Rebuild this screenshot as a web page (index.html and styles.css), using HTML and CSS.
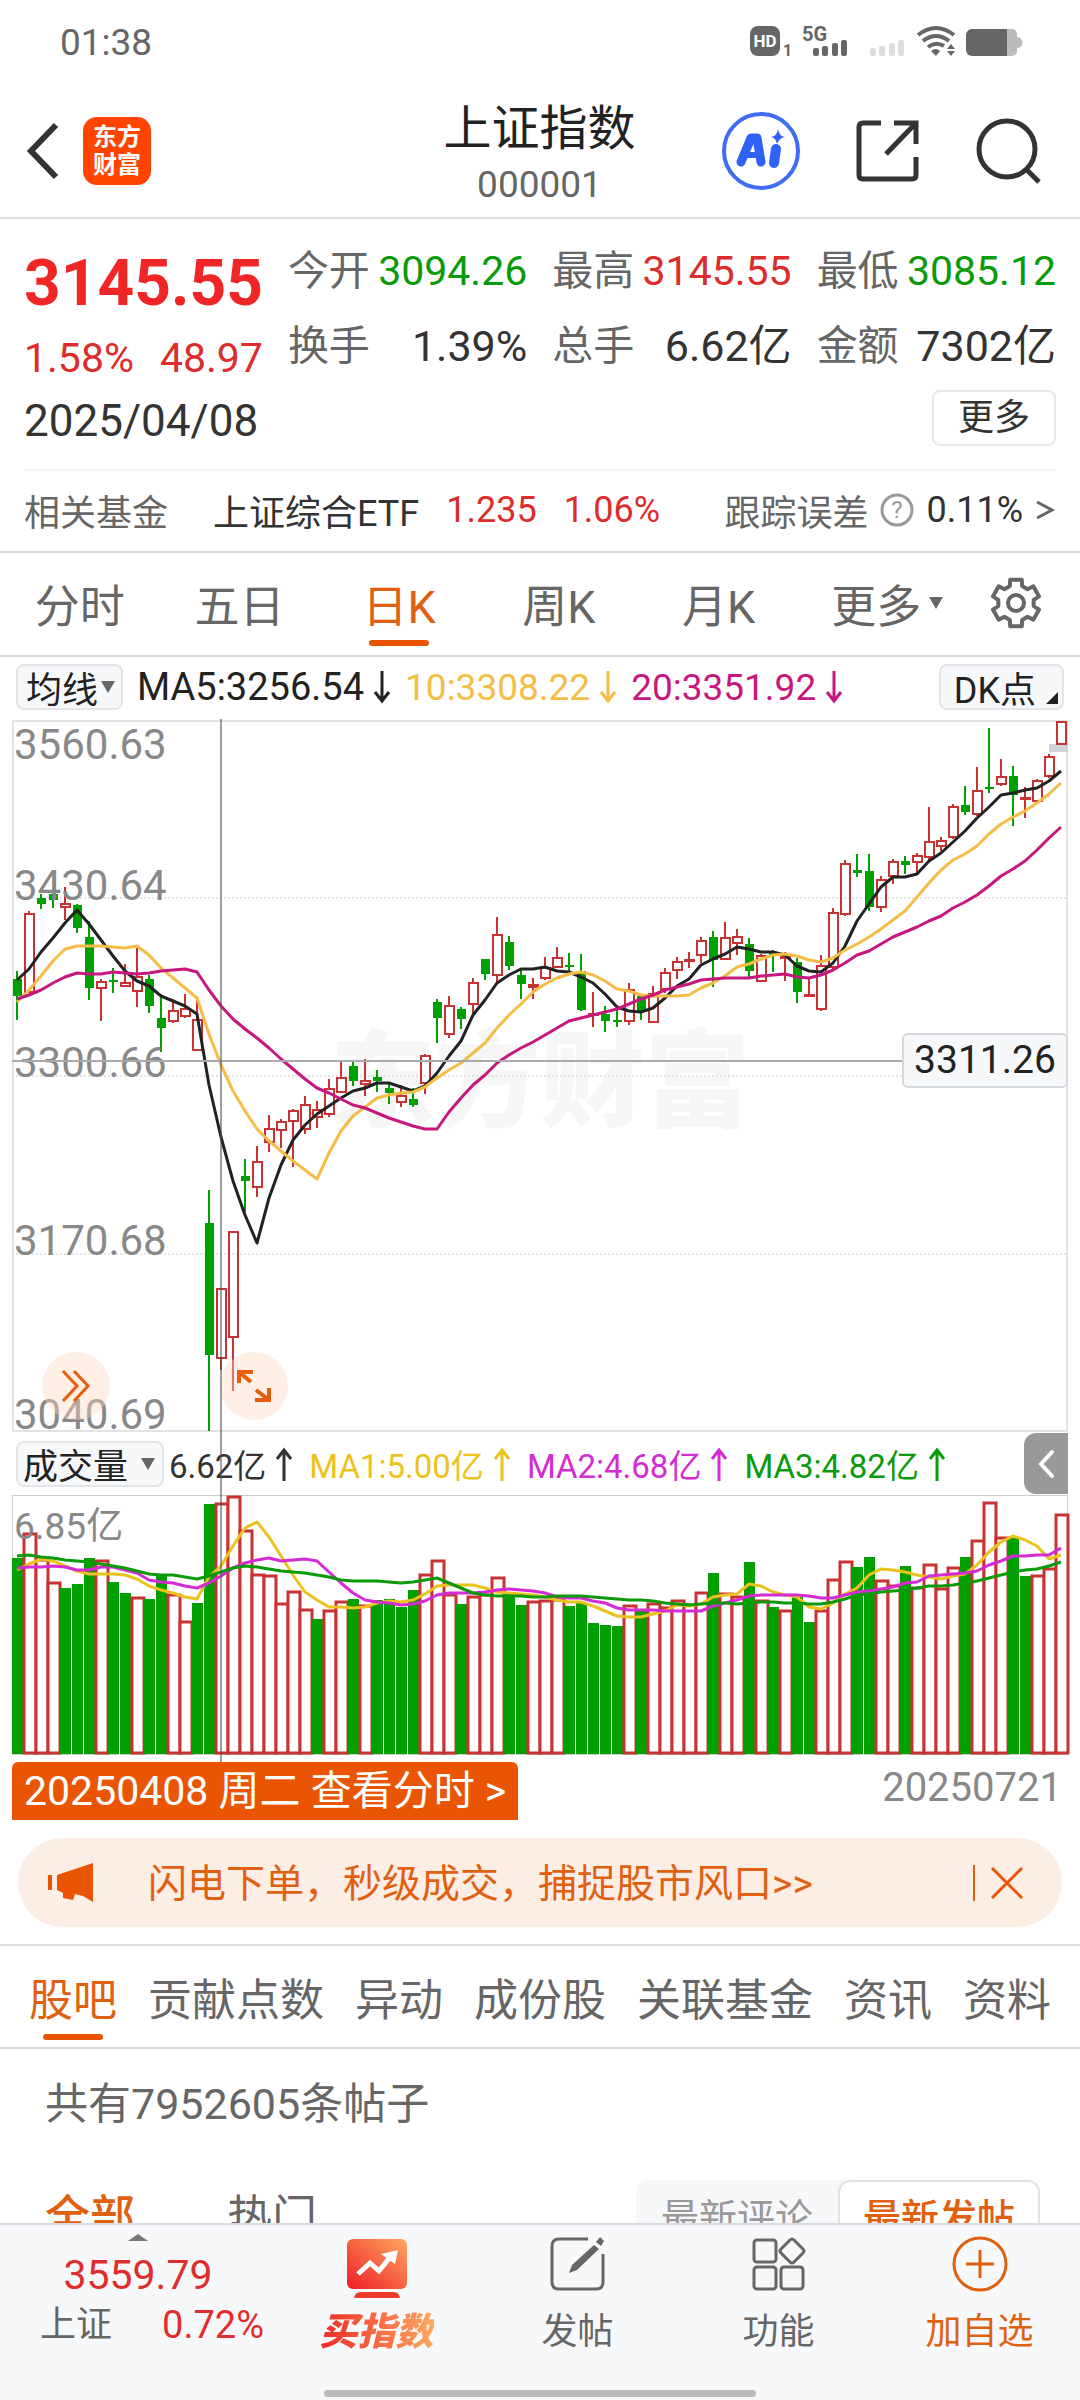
FILE: index.html
```html
<!DOCTYPE html>
<html lang="zh-CN">
<head>
    <meta charset="UTF-8">
    <meta name="viewport" content="width=device-width, initial-scale=1.0">
    <title>上证指数 000001</title>
    <link rel="stylesheet" href="styles.css">
</head>
<body>
    <div class="status-bar">
        <span>01:38</span>
        <svg class="status-icons" width="272" height="32" viewBox="0 0 272 32">
            <rect x="0" y="0" width="30" height="30" rx="8" fill="#666"/>
            <text x="15" y="21" class="hd-text">HD</text>
            <text x="33" y="30" class="sim-text">1</text>
            <text x="52" y="15" class="net-text">5G</text>
            <g fill="#666">
                <rect x="63" y="22" width="6" height="8" rx="2"/>
                <rect x="72" y="20" width="6" height="10" rx="2"/>
                <rect x="82" y="17" width="6" height="13" rx="2"/>
                <rect x="91" y="14" width="6" height="16" rx="2"/>
            </g>
            <g fill="#ddd">
                <rect x="120" y="22" width="6" height="8" rx="2"/>
                <rect x="129" y="20" width="6" height="10" rx="2"/>
                <rect x="139" y="17" width="6" height="13" rx="2"/>
                <rect x="148" y="14" width="6" height="16" rx="2"/>
            </g>
            <g fill="none" stroke="#666" stroke-width="4">
                <path d="M168 9 Q186 -5 204 9"/>
                <path d="M173 15 Q186 5 199 15"/>
                <path d="M178 21 Q186 15 194 20"/>
            </g>
            <path d="M181 25 Q186 21 190 25 L186 30Z M197 23 l4 -5 4 5Z M197 25 h8 l-4 5Z" fill="#666"/>
            <path d="M252 3 h10 a5 5 0 0 1 5 5 v3 a4 4 0 0 1 0 11 v3 a5 5 0 0 1 -5 5 h-10Z" fill="#bbb"/>
            <path d="M257 3 v27 h-35 a6 6 0 0 1 -6 -6 v-15 a6 6 0 0 1 6 -6Z" fill="#666"/>
        </svg>
    </div>

    <header class="header">
        <div class="header-left">
            <button class="icon-button" aria-label="返回">
                <svg width="34" height="60" viewBox="0 0 34 60"><path d="M31 4 L6 30 L31 56" fill="none" stroke="#333" stroke-width="6"/></svg>
            </button>
            <div class="logo">东方<br>财富</div>
        </div>
        <div class="header-title">
            <h1>上证指数</h1>
            <p>000001</p>
        </div>
        <div class="header-right">
            <button class="icon-button" aria-label="AI">
                <svg width="78" height="78" viewBox="0 0 78 78">
                    <circle cx="39" cy="39" r="37" fill="#fff" stroke="#3f6cf2" stroke-width="4"/>
                    <g fill="none" stroke="#2f63f6" stroke-linecap="round" stroke-linejoin="round">
                        <path d="M19 50 L29 26 L35 26 L39 50" stroke-width="9"/>
                        <path d="M24 43 H37" stroke-width="6"/>
                        <path d="M54 37 L52 51" stroke-width="10"/>
                    </g>
                    <path d="M56 17 Q57 24 63 25 Q57 26 55 32 Q54 26 49 25 Q55 24 56 17Z" fill="#2f63f6"/>
                </svg>
            </button>
            <button class="icon-button" aria-label="分享">
                <svg width="64" height="64" viewBox="0 0 64 64" fill="none" stroke="#333" stroke-width="5">
                    <path d="M25 4 H7 Q3 4 3 8 V56 Q3 60 7 60 H56 Q60 60 60 56 V38"/>
                    <path d="M38 4 H60 V25 M60 4 L30 35"/>
                </svg>
            </button>
            <button class="icon-button" aria-label="搜索">
                <svg width="66" height="66" viewBox="0 0 66 66" fill="none" stroke="#333" stroke-width="5">
                    <circle cx="31" cy="31" r="28"/>
                    <path d="M50 51 L63 64"/>
                </svg>
            </button>
        </div>
    </header>

    <main class="content">
        <section class="quote">
            <div class="quote-main">
                <div class="price">3145.55</div>
                <div class="change"><span>1.58%</span><span>48.97</span></div>
                <div class="date">2025/04/08</div>
            </div>
            <div class="quote-side">
                <dl class="stats">
                    <div><dt>今开</dt><dd class="down">3094.26</dd></div>
                    <div><dt>最高</dt><dd class="up">3145.55</dd></div>
                    <div><dt>最低</dt><dd class="down">3085.12</dd></div>
                    <div><dt>换手</dt><dd class="amount">1.39%</dd></div>
                    <div><dt>总手</dt><dd class="amount">6.62亿</dd></div>
                    <div><dt>金额</dt><dd class="amount">7302亿</dd></div>
                </dl>
                <button class="more-button">更多</button>
            </div>
        </section>

        <a class="fund" href="#">
            <span class="muted">相关基金</span>
            <span class="fund-name">上证综合ETF</span>
            <span class="up fund-price">1.235</span>
            <span class="up">1.06%</span>
            <span class="fund-error">
                <span class="muted">跟踪误差</span>
                <svg width="34" height="34" viewBox="0 0 34 34">
                    <circle cx="17" cy="17" r="15" fill="none" stroke="#999" stroke-width="3"/>
                    <text x="17" y="25" class="help-text">?</text>
                </svg>
                <span>0.11%</span>
                <svg width="20" height="24" viewBox="0 0 20 24"><path d="M2 4 L17 12 L2 20" fill="none" stroke="#666" stroke-width="3"/></svg>
            </span>
        </a>

        <nav class="period-tabs">
            <button>分时</button>
            <button>五日</button>
            <button class="active">日K</button>
            <button>周K</button>
            <button>月K</button>
            <button>更多<i class="caret"></i></button>
            <button aria-label="设置">
                <svg width="52" height="52" viewBox="-26 -26 52 52" fill="none" stroke="#666" stroke-width="4" stroke-linejoin="round">
                    <path d="M-6.2 -16.9 L-5.8 -23.3 H5.8 L6.2 -16.9 L11.6 -13.8 L17.3 -16.7 L23.1 -6.6 L17.7 -3.1 V3.1 L23.1 6.6 L17.3 16.7 L11.6 13.8 L6.2 16.9 L5.8 23.3 H-5.8 L-6.2 16.9 L-11.6 13.8 L-17.3 16.7 L-23.1 6.6 L-17.7 3.1 V-3.1 L-23.1 -6.6 L-17.3 -16.7 L-11.6 -13.8Z"/>
                    <circle cx="0" cy="0" r="8"/>
                </svg>
            </button>
        </nav>

        <section class="charts">
            <div class="legend">
                <button class="chip">均线<i class="caret"></i></button>
                <span class="ma-black">MA5:3256.54<svg class="arrow" viewBox="0 0 18 34"><path d="M9 1 V31 M2 22 L9 31 L16 22"/></svg></span>
                <span class="ma-yellow">10:3308.22<svg class="arrow" viewBox="0 0 18 34"><path d="M9 1 V31 M2 22 L9 31 L16 22"/></svg></span>
                <span class="ma-magenta">20:3351.92<svg class="arrow" viewBox="0 0 18 34"><path d="M9 1 V31 M2 22 L9 31 L16 22"/></svg></span>
                <button class="chip chip-dk">DK点<i class="corner"></i></button>
            </div>

            <div class="price-chart">
                <svg id="price-svg" viewBox="0 0 1056 712"></svg>
                <div class="cross-price">3311.26</div>
                <button class="round-button expand-right" aria-label="展开">
                    <svg width="30" height="32" viewBox="0 0 30 32" fill="none" stroke="#e85d0c" stroke-width="3"><path d="M2 1 L16 16 L2 31 M13 1 L27 16 L13 31"/></svg>
                </button>
                <button class="round-button full-screen" aria-label="全屏">
                    <svg width="36" height="34" viewBox="0 0 36 34" fill="none" stroke="#e85d0c" stroke-width="4"><path d="M3 14 V3 H17 M3 3 L15 13 M33 19 V31 H19 M33 31 L20 21"/></svg>
                </button>
            </div>

            <div class="legend volume-legend">
                <button class="chip">成交量<i class="caret"></i></button>
                <span>6.62亿<svg class="arrow" viewBox="0 0 18 34"><path d="M9 34 V3 M2 12 L9 3 L16 12"/></svg></span>
                <span class="vol-yellow">MA1:5.00亿<svg class="arrow" viewBox="0 0 18 34"><path d="M9 34 V3 M2 12 L9 3 L16 12"/></svg></span>
                <span class="vol-magenta">MA2:4.68亿<svg class="arrow" viewBox="0 0 18 34"><path d="M9 34 V3 M2 12 L9 3 L16 12"/></svg></span>
                <span class="vol-green">MA3:4.82亿<svg class="arrow" viewBox="0 0 18 34"><path d="M9 34 V3 M2 12 L9 3 L16 12"/></svg></span>
                <button class="collapse" aria-label="收起">
                    <svg width="18" height="30" viewBox="0 0 18 30"><path d="M15 3 L4 15 L15 27" fill="none" stroke="#fff" stroke-width="4" stroke-linecap="round"/></svg>
                </button>
            </div>

            <svg id="volume-svg" viewBox="0 0 1056 260"></svg>
            <div class="cross-line"></div>
        </section>

        <div class="date-row">
            <button class="date-button">20250408 周二 查看分时 &gt;</button>
            <span>20250721</span>
        </div>

        <div class="notice">
            <svg width="46" height="40" viewBox="0 0 46 40" fill="#ea5504">
                <path d="M0 12 H4 V27 H0Z M9 12 L45 0 V39 L35 33 L27 31 L25 37 L15 35 L15 30 L9 27Z"/>
            </svg>
            <a href="#">闪电下单，秒级成交，捕捉股市风口&gt;&gt;</a>
            <button aria-label="关闭">
                <svg width="34" height="34" viewBox="0 0 34 34"><path d="M2 2 L32 32 M32 2 L2 32" stroke="#ea5504" stroke-width="3"/></svg>
            </button>
        </div>

        <nav class="info-tabs">
            <button class="active">股吧</button>
            <button>贡献点数</button>
            <button>异动</button>
            <button>成份股</button>
            <button>关联基金</button>
            <button>资讯</button>
            <button>资料</button>
        </nav>

        <section class="posts">
            <p>共有7952605条帖子</p>
            <div class="filters">
                <button class="filter active">全部</button>
                <button class="filter">热门</button>
                <div class="sort">
                    <button>最新评论</button>
                    <button class="active">最新发帖</button>
                </div>
            </div>
        </section>
    </main>

    <footer class="bottom-bar">
        <div class="bottom-items">
            <button class="index-ticker">
                <i class="caret-up"></i>
                <span class="ticker-price">3559.79</span>
                <span class="ticker-row"><span>上证</span><span class="ticker-change">0.72%</span></span>
            </button>
            <button class="bottom-item buy">
                <svg width="60" height="62" viewBox="0 0 60 62">
                    <defs>
                        <linearGradient id="buy-fill" x1="0" y1="1" x2="1" y2="0">
                            <stop offset="0" stop-color="#ee1c25"/>
                            <stop offset="1" stop-color="#ffa860"/>
                        </linearGradient>
                    </defs>
                    <rect x="0" y="3" width="60" height="50" rx="6" fill="url(#buy-fill)"/>
                    <path d="M7 62 Q8 56 14 56 H46 Q52 56 53 62Z" fill="#ee3a2c"/>
                    <path d="M11 38 L23 27 L32 35 L44 20" fill="none" stroke="#fff" stroke-width="5"/>
                    <path d="M34 18 L51 14 L48 28Z" fill="#fff"/>
                </svg>
                <span>买指数</span>
            </button>
            <button class="bottom-item">
                <svg width="56" height="62" viewBox="0 0 56 62">
                    <path d="M38 3 H9 Q2 3 2 10 V46 Q2 53 9 53 H46 Q53 53 53 46 V18" fill="none" stroke="#666" stroke-width="3"/>
                    <path d="M50 1 L54 5 L51 10 L46 6Z M44 9 L49 13 L27 34 L19 37 L22 29Z" fill="#666"/>
                </svg>
                <span>发帖</span>
            </button>
            <button class="bottom-item">
                <svg width="54" height="62" viewBox="0 0 54 62" fill="none" stroke="#666" stroke-width="3">
                    <rect x="2" y="4" width="22" height="22" rx="3"/>
                    <rect x="2" y="31" width="22" height="22" rx="3"/>
                    <rect x="29" y="31" width="22" height="22" rx="3"/>
                    <path d="M38 4 Q40 2 42 4 L51 13 Q53 15 51 17 L42 26 Q40 28 38 26 L29 17 Q27 15 29 13Z"/>
                </svg>
                <span>功能</span>
            </button>
            <button class="bottom-item add">
                <svg width="58" height="62" viewBox="0 0 58 62" fill="none" stroke="#e06010" stroke-width="3">
                    <circle cx="29" cy="28" r="26"/>
                    <path d="M15 28 H43 M29 14 V42"/>
                </svg>
                <span>加自选</span>
            </button>
        </div>
        <div class="home-indicator"></div>
    </footer>

    <script src="chart.js"></script>
</body>
</html>
```
FILE: styles.css
```css
* {
    box-sizing: border-box;
}

body {
    margin: 0;
    height: 100vh;
    display: flex;
    flex-direction: column;
    background-color: #fff;
    color: #333;
    font-family: Roboto, "Noto Sans CJK SC", sans-serif;
    font-size: 36px;
}

h1, p, dl, dd {
    margin: 0;
    font-weight: 400;
}

button {
    padding: 0;
    border: none;
    background: none;
    color: inherit;
    font: inherit;
    cursor: pointer;
}

a {
    color: inherit;
    text-decoration: none;
}

svg {
    display: block;
    flex-shrink: 0;
    overflow: visible;
}

.up {
    color: #dc2c2c;
}

.down {
    color: #0a9a0a;
}

.muted {
    color: #666;
}

.caret {
    border: 7px solid transparent;
    border-top: 12px solid #666;
    border-bottom: none;
}

/* Status bar */
.status-bar {
    display: flex;
    justify-content: space-between;
    align-items: center;
    height: 84px;
    flex-shrink: 0;
    padding: 0 58px 0 60px;
    color: #666;
    font-size: 37px;
}

.hd-text {
    font-size: 17px;
    font-weight: 700;
    fill: #fff;
    text-anchor: middle;
}

.sim-text {
    font-size: 16px;
    font-weight: 700;
    fill: #666;
}

.net-text {
    font-size: 20px;
    font-weight: 700;
    fill: #666;
}

/* Header */
.header {
    display: grid;
    grid-template-columns: 1fr auto 1fr;
    align-items: center;
    height: 135px;
    flex-shrink: 0;
    padding: 0 38px 0 25px;
    border-bottom: 2px solid #ddd;
}

.header-left,
.header-right {
    display: flex;
    align-items: center;
}

.header-left {
    gap: 24px;
}

.header-right {
    justify-content: flex-end;
    gap: 56px;
}

.header-title {
    padding: 8px 0 0 12px;
    text-align: center;
}

.header-title h1 {
    color: #222;
    font-size: 48px;
    line-height: 60px;
}

.header-title p {
    color: #666;
    font-size: 37px;
    line-height: 52px;
}

.logo {
    width: 68px;
    height: 68px;
    padding-top: 6px;
    border-radius: 14px;
    background-color: #ff4400;
    color: #fff;
    font-size: 24px;
    font-weight: 700;
    line-height: 28px;
    text-align: center;
}

.content {
    flex: 1;
    min-height: 0;
    overflow: hidden;
}

/* Quote */
.quote {
    display: flex;
    gap: 25px;
    margin: 0 24px;
    padding: 22px 0 18px;
    border-bottom: 2px solid #f5f5f5;
    font-size: 41px;
    line-height: 60px;
}

.quote-main {
    padding-top: 8px;
}

.price {
    color: #f02626;
    font-size: 64px;
    font-weight: 700;
    line-height: 70px;
}

.change {
    display: flex;
    justify-content: space-between;
    margin-top: 9px;
    color: #dc2c2c;
}

.date {
    margin-top: 3px;
    font-size: 44px;
}

.quote-side {
    flex: 1;
    text-align: right;
}

.stats {
    display: grid;
    grid-template-columns: repeat(3, 1fr);
    gap: 15px 25px;
}

.stats div {
    display: flex;
    justify-content: space-between;
    white-space: nowrap;
}

.stats dt {
    color: #666;
}

.stats .amount {
    font-size: 43px;
}

.more-button {
    width: 124px;
    height: 56px;
    margin-top: 14px;
    border: 2px solid #e8e8e8;
    border-radius: 8px;
    font-size: 36px;
    line-height: 50px;
}

/* Related fund */
.fund {
    display: flex;
    align-items: center;
    height: 82px;
    padding: 0 25px 2px 24px;
    border-bottom: 2px solid #ddd;
    white-space: nowrap;
}

.fund-name {
    margin-left: 45px;
}

.fund-price {
    margin: 0 27px;
}

.fund-error {
    display: flex;
    align-items: center;
    gap: 12px;
    margin-left: auto;
}

.help-text {
    font-size: 24px;
    fill: #999;
    text-anchor: middle;
}

/* Period tabs */
.period-tabs {
    display: grid;
    grid-template-columns: repeat(5, 160fr) 178fr 80fr;
    height: 104px;
    padding: 0 24px 2px 0;
    border-bottom: 2px solid #ddd;
    color: #666;
    font-size: 45px;
}

.period-tabs button {
    display: flex;
    align-items: center;
    justify-content: center;
    gap: 8px;
    position: relative;
}

.period-tabs .active,
.info-tabs .active {
    color: #e06010;
}

.period-tabs .active::after,
.info-tabs .active::after {
    content: "";
    position: absolute;
    left: 50%;
    bottom: 7px;
    width: 60px;
    height: 6px;
    margin-left: -30px;
    border-radius: 3px;
    background-color: #ea5504;
}

/* Charts */
.charts {
    position: relative;
    padding: 0 12px;
}

.charts text {
    font-size: 42px;
    fill: #888;
}

.charts .watermark {
    font-size: 105px;
    font-weight: 900;
    fill: #f6f6f6;
    text-anchor: middle;
}

.charts .volume-label {
    font-size: 37px;
}

.legend {
    display: flex;
    align-items: center;
    gap: 14px;
    height: 63px;
    padding: 0 4px 3px;
    font-size: 37px;
    white-space: nowrap;
}

.legend span {
    display: flex;
    align-items: center;
    gap: 9px;
}

.arrow {
    width: 18px;
    height: 34px;
    fill: none;
    stroke: currentColor;
    stroke-width: 3;
}

.chip {
    display: flex;
    align-items: center;
    gap: 3px;
    height: 46px;
    padding: 0 6px 0 8px;
    border: 2px solid #e3e5e9;
    border-radius: 8px;
    background-color: #f7f8fa;
    color: #222;
    font-size: 36px;
}

.chip-dk {
    gap: 10px;
    margin-left: auto;
    padding: 0 4px 0 13px;
}

.corner {
    align-self: flex-end;
    margin-bottom: 4px;
    border-left: 12px solid transparent;
    border-bottom: 12px solid #222;
}

.legend .ma-black {
    color: #222;
    font-size: 38px;
}

.ma-yellow {
    color: #f5bd45;
}

.ma-magenta {
    color: #c7177e;
}

.volume-legend {
    gap: 16px;
    padding: 0 0 0 4px;
    font-size: 33px;
}

.volume-legend .chip {
    gap: 13px;
    margin-right: -11px;
    padding: 0 7px 0 5px;
    font-size: 35px;
}

.vol-yellow {
    color: #ecc21c;
}

.vol-magenta {
    color: #d42bd4;
}

.vol-green {
    color: #0a9a0a;
}

.collapse {
    display: flex;
    align-items: center;
    justify-content: center;
    width: 44px;
    height: 61px;
    margin-left: auto;
    border-radius: 12px 0 0 12px;
    background-color: #999;
}

.price-chart {
    position: relative;
}

.price-chart > svg,
.charts > svg {
    width: 100%;
}

.cross-price {
    position: absolute;
    right: 0;
    top: 44%;
    width: 166px;
    height: 55px;
    border: 2px solid #d5d9de;
    border-radius: 6px;
    background-color: #f7f8fa;
    color: #222;
    font-size: 39px;
    line-height: 51px;
    text-align: center;
}

.cross-line {
    position: absolute;
    left: 20.4%;
    top: 62px;
    bottom: -7px;
    width: 2px;
    background-color: rgba(80, 80, 80, 0.55);
}

.round-button {
    position: absolute;
    bottom: 12px;
    width: 68px;
    height: 68px;
    border-radius: 50%;
    background-color: rgba(255, 215, 190, 0.4);
}

.round-button svg {
    margin: auto;
}

.expand-right {
    left: 30px;
}

.full-screen {
    left: 208px;
}

/* Selected date */
.date-row {
    display: flex;
    justify-content: space-between;
    margin-top: 7px;
    padding: 0 18px 0 12px;
    color: #888;
    font-size: 40px;
    line-height: 52px;
}

.date-button {
    height: 58px;
    padding: 0 12px;
    border-radius: 6px 6px 0 0;
    background-color: #ea5504;
    color: #fff;
    font-size: 41px;
}

/* Notice */
.notice {
    display: flex;
    align-items: center;
    height: 89px;
    margin: 18px 18px 17px;
    padding: 0 38px 0 30px;
    border-radius: 45px;
    background-color: #fdeee5;
    color: #e06010;
    font-size: 39px;
}

.notice a {
    margin-left: 54px;
    padding-bottom: 5px;
}

.notice button {
    height: 36px;
    margin-left: auto;
    padding-left: 15px;
    border-left: 2px solid #e06010;
}

/* Info tabs */
.info-tabs {
    display: flex;
    justify-content: space-between;
    height: 105px;
    padding: 0 29px;
    border-top: 2px solid #ddd;
    border-bottom: 2px solid #ddd;
    color: #666;
    font-size: 44px;
}

.info-tabs button {
    position: relative;
    white-space: nowrap;
}

/* Posts */
.posts {
    padding: 0 40px 0 45px;
    color: #666;
    font-size: 43px;
}

.posts p {
    padding-top: 24px;
    line-height: 62px;
}

.filters {
    display: flex;
    align-items: flex-start;
    margin-top: 45px;
}

.filter {
    margin-right: 92px;
    font-size: 45px;
    line-height: 76px;
}

.filter.active {
    color: #e06010;
    font-weight: 500;
}

.sort {
    display: flex;
    margin-left: auto;
    border-radius: 12px;
    background-color: #f7f8fa;
    color: #999;
    font-size: 38px;
    line-height: 72px;
}

.sort button {
    width: 202px;
}

.sort .active {
    border: 2px solid #e3e3e3;
    border-radius: 12px;
    background-color: #fff;
    color: #e06010;
    font-weight: 500;
}

/* Bottom bar */
.bottom-bar {
    flex-shrink: 0;
    height: 177px;
    display: flex;
    flex-direction: column;
    justify-content: space-between;
    padding-bottom: 3px;
    border-top: 2px solid #d8dce0;
    background-color: #f7f8fa;
    color: #666;
}

.bottom-items {
    display: grid;
    grid-template-columns: 276fr repeat(4, 201fr);
}

.bottom-items button {
    display: flex;
    flex-direction: column;
    align-items: center;
}

.bottom-item {
    gap: 9px;
    padding-top: 11px;
    line-height: 50px;
}

.index-ticker {
    padding-top: 9px;
    line-height: 50px;
}

.caret-up {
    border: 10px solid transparent;
    border-bottom: 7px solid #777;
    border-top: none;
}

.ticker-price {
    margin-top: 9px;
    color: #e02c2c;
    font-size: 41px;
}

.ticker-row {
    display: flex;
    justify-content: space-between;
    width: 224px;
    margin-left: 28px;
}

.ticker-change {
    color: #e02c2c;
    font-size: 38px;
}

.buy span {
    background: linear-gradient(90deg, #ee2a25, #ffa860);
    -webkit-background-clip: text;
    background-clip: text;
    color: transparent;
    font-size: 38px;
    font-style: italic;
    font-weight: 900;
}

.add {
    color: #e06010;
}

.home-indicator {
    width: 40%;
    height: 7px;
    margin: 0 auto;
    border-radius: 4px;
    background-color: #bbb;
}
```
FILE: chart.js
```js
const UP = '#c83232';
const DOWN = '#00a000';
const STEP = 12;
const FIRST_X = 5;

// Each day: direction, high, body top, body bottom, low (levels from the top of the scale)
const days = [
    ['d', 575, 592, 627, 678], ['u', 447, 451, 621, 621], ['d', 410, 420, 432, 442], ['d', 405, 411, 423, 440],
    ['u', 395, 430, 440, 466], ['d', 431, 435, 482, 494], ['d', 467, 503, 609, 636], ['u', 590, 595, 612, 681],
    ['d', 567, 594, 598, 621], ['u', 560, 598, 608, 608], ['u', 525, 585, 618, 650], ['d', 582, 590, 649, 664],
    ['d', 622, 674, 694, 746], ['u', 634, 657, 682, 684], ['u', 622, 653, 671, 673], ['u', 630, 676, 743, 743],
    ['d', 1038, 1109, 1388, 1550], ['u', 1246, 1246, 1397, 1420], ['u', 1126, 1126, 1352, 1465], ['d', 973, 1009, 1019, 1085],
    ['u', 945, 977, 1033, 1054], ['u', 879, 906, 939, 958], ['u', 888, 891, 914, 950], ['u', 867, 868, 893, 990],
    ['u', 840, 855, 911, 919], ['u', 850, 866, 886, 906], ['u', 803, 822, 879, 884], ['u', 767, 798, 832, 832],
    ['d', 765, 776, 807, 818], ['u', 760, 805, 815, 838], ['d', 784, 799, 808, 831], ['d', 809, 822, 832, 856],
    ['u', 815, 836, 854, 862], ['d', 822, 845, 859, 863], ['u', 750, 751, 813, 835], ['d', 634, 640, 674, 726],
    ['u', 626, 647, 710, 716], ['d', 651, 654, 676, 696], ['u', 589, 597, 646, 668], ['d', 548, 549, 581, 594],
    ['u', 459, 496, 584, 598], ['d', 500, 513, 563, 571], ['d', 570, 583, 602, 634], ['u', 588, 601, 609, 634],
    ['u', 545, 565, 592, 593], ['u', 523, 544, 567, 567], ['d', 536, 562, 565, 578], ['d', 539, 575, 657, 658],
    ['u', 618, 662, 665, 693], ['d', 649, 665, 680, 703], ['d', 656, 678, 682, 692], ['u', 600, 613, 683, 689],
    ['d', 628, 628, 658, 677], ['u', 605, 620, 684, 684], ['u', 568, 576, 615, 620], ['u', 545, 553, 573, 590],
    ['u', 534, 549, 554, 567], ['u', 502, 508, 542, 557], ['d', 490, 503, 551, 607], ['u', 470, 501, 551, 551],
    ['u', 485, 499, 516, 540], ['d', 504, 516, 574, 592], ['u', 538, 540, 598, 598], ['d', 529, 536, 543, 576],
    ['u', 533, 541, 549, 595], ['d', 547, 554, 618, 642], ['u', 592, 623, 628, 630], ['u', 540, 561, 656, 659],
    ['u', 441, 448, 567, 570], ['u', 338, 345, 455, 457], ['d', 326, 359, 367, 374], ['d', 327, 361, 438, 446],
    ['u', 372, 379, 441, 448], ['u', 336, 340, 374, 389], ['d', 331, 340, 349, 369], ['u', 324, 329, 346, 367],
    ['u', 227, 298, 335, 343], ['u', 291, 297, 312, 320], ['u', 219, 225, 292, 294], ['d', 181, 222, 238, 243],
    ['u', 142, 190, 243, 246], ['d', 58, 185, 188, 197], ['u', 125, 160, 180, 181], ['d', 140, 161, 202, 266],
    ['u', 184, 205, 210, 250], ['u', 168, 169, 216, 218], ['u', 114, 118, 162, 165], ['u', 44, 44, 95, 95]
];

const ma5 = [594, 570, 534, 504, 473, 445, 475, 508, 543, 575, 596, 606, 626, 637, 648, 666, 815, 925, 1020, 1092, 1151, 1056, 985, 933, 900, 878, 861, 843, 829, 823, 811, 812, 820, 828, 818, 791, 755, 722, 668, 635, 599, 583, 569, 570, 566, 575, 576, 587, 599, 623, 651, 659, 660, 652, 631, 606, 592, 562, 549, 537, 523, 528, 534, 533, 541, 563, 573, 577, 557, 521, 469, 431, 395, 374, 374, 368, 341, 323, 301, 278, 249, 227, 201, 197, 190, 186, 172, 150];
const ma10 = [640, 615, 584, 553, 528, 520, 522, 521, 524, 525, 520, 541, 568, 588, 611, 631, 708, 773, 829, 871, 909, 934, 955, 976, 996, 1014, 960, 914, 882, 863, 844, 836, 832, 830, 819, 801, 783, 770, 748, 727, 695, 668, 645, 619, 601, 588, 580, 577, 583, 595, 612, 617, 624, 626, 627, 628, 625, 611, 599, 585, 565, 560, 548, 541, 537, 543, 550, 555, 547, 530, 516, 502, 486, 466, 447, 418, 387, 359, 338, 326, 309, 284, 262, 247, 234, 218, 199, 176];
const ma20 = [634, 624, 614, 599, 587, 579, 580, 581, 577, 579, 580, 578, 574, 572, 570, 576, 614, 648, 675, 697, 715, 738, 760, 781, 803, 823, 833, 845, 857, 865, 876, 885, 893, 903, 908, 908, 872, 843, 816, 794, 770, 752, 738, 725, 710, 694, 681, 674, 667, 661, 654, 643, 634, 624, 615, 607, 602, 594, 591, 589, 589, 588, 585, 582, 581, 586, 588, 583, 572, 557, 541, 531, 517, 503, 491, 480, 468, 457, 441, 428, 412, 393, 373, 357, 340, 318, 293, 268];

const volumes = [382, 308, 385, 453, 473, 460, 381, 387, 454, 486, 498, 504, 436, 490, 572, 517, 220, 217, 197, 298, 430, 434, 518, 482, 535, 565, 539, 512, 504, 522, 507, 506, 530, 477, 431, 389, 490, 519, 495, 490, 440, 489, 524, 511, 509, 505, 525, 517, 578, 582, 585, 522, 541, 517, 528, 507, 520, 484, 426, 487, 495, 393, 509, 530, 539, 500, 575, 537, 445, 391, 408, 379, 449, 463, 406, 470, 401, 473, 408, 378, 328, 214, 319, 322, 437, 433, 411, 249];
const volumeDown = [0, 4, 5, 6, 8, 9, 11, 12, 15, 16, 25, 28, 30, 31, 32, 33, 37, 41, 42, 46, 47, 48, 49, 50, 52, 58, 61, 63, 65, 66, 70, 71, 74, 79, 83, 84];
const vol1 = [417, 400, 386, 392, 407, 421, 431, 431, 431, 434, 445, 467, 477, 486, 500, 504, 440, 405, 345, 292, 273, 318, 376, 432, 484, 508, 529, 529, 533, 529, 518, 510, 514, 508, 490, 467, 463, 462, 463, 473, 483, 488, 489, 492, 500, 507, 514, 515, 526, 541, 557, 558, 560, 549, 542, 523, 526, 520, 500, 492, 489, 461, 466, 483, 494, 500, 530, 536, 518, 489, 472, 433, 416, 419, 423, 434, 440, 445, 437, 430, 402, 365, 333, 315, 327, 347, 385, 373];
const vol2 = [411, 409, 408, 406, 408, 417, 417, 410, 410, 418, 428, 449, 453, 457, 466, 472, 457, 437, 412, 397, 389, 383, 390, 389, 386, 392, 425, 457, 487, 507, 514, 518, 522, 521, 510, 493, 487, 488, 487, 483, 479, 476, 477, 481, 487, 498, 502, 502, 510, 518, 533, 537, 537, 539, 540, 541, 542, 541, 525, 516, 507, 495, 492, 493, 494, 493, 496, 501, 503, 493, 485, 482, 476, 468, 457, 454, 437, 433, 429, 427, 420, 404, 390, 376, 377, 374, 374, 353];
const vol3 = [377, 374, 378, 383, 387, 391, 395, 399, 405, 413, 421, 429, 432, 432, 438, 446, 436, 424, 413, 407, 409, 416, 422, 424, 427, 432, 440, 448, 450, 452, 452, 453, 456, 455, 449, 442, 456, 472, 487, 494, 496, 497, 496, 498, 498, 496, 496, 496, 499, 503, 506, 507, 508, 511, 516, 520, 523, 521, 517, 518, 520, 517, 515, 515, 517, 518, 520, 520, 514, 506, 494, 491, 485, 481, 477, 471, 466, 465, 463, 458, 452, 443, 433, 424, 418, 414, 407, 394];

const dayX = i => FIRST_X + i * STEP;
const priceY = v => Math.round((v - 42) * 711 / 1507);
const volumeY = v => Math.round((v - 196) / 3) + 1;

function line(values, scale, color) {
    const points = values.map((v, i) => `${dayX(i)},${scale(v)}`).join(' ');
    return `<polyline points="${points}" fill="none" stroke="${color}" stroke-width="3" stroke-linejoin="round"/>`;
}

function candle([dir, high, top, bottom, low], i) {
    const x = dayX(i);
    const [h, t, b, l] = [high, top, bottom, low].map(priceY);
    if (dir === 'd') {
        return `<path d="M${x} ${h}V${l}" stroke="${DOWN}" stroke-width="2"/>
            <rect x="${x - 4}" y="${t}" width="9" height="${Math.max(b - t, 2)}" fill="${DOWN}"/>`;
    }
    return `<path d="M${x} ${h}V${t}M${x} ${b}V${l}" stroke="${UP}" stroke-width="2"/>
        <rect x="${x - 4}" y="${t + 1}" width="9" height="${Math.max(b - t - 2, 1)}" fill="none" stroke="${UP}" stroke-width="2"/>`;
}

function drawPrice() {
    const grid = [178, 356, 534].map(y => `<path d="M0 ${y}H1056" stroke="#e4e4e4" stroke-width="2" stroke-dasharray="2 2"/>`);
    const labels = [['3560.63', 39], ['3430.64', 180], ['3300.66', 357], ['3170.68', 535], ['3040.69', 709]]
        .map(([text, y]) => `<text x="2" y="${y}">${text}</text>`);
    document.getElementById('price-svg').innerHTML = `
        <text class="watermark" x="528" y="398">东方财富</text>
        <path d="M1 1H1055V711H1Z" fill="none" stroke="#e3e3e3" stroke-width="2"/>
        ${grid.join('')}
        <rect x="1037" y="24" width="19" height="8" fill="#d0d4d9"/>
        ${days.map(candle).join('')}
        ${labels.join('')}
        ${line(ma5, priceY, '#222')}
        ${line(ma10, priceY, '#f5bd45')}
        ${line(ma20, priceY, '#c7177e')}
        <path d="M0 341H1056" stroke="#aaa" stroke-width="2"/>`;
}

function drawVolume() {
    const bars = volumes.map((v, i) => {
        const x = dayX(i);
        const y = volumeY(v);
        if (volumeDown.includes(i)) {
            return `<rect x="${x - 5}" y="${y}" width="11" height="${259 - y}" fill="${DOWN}"/>`;
        }
        return `<rect x="${x - 5}" y="${y + 1}" width="12" height="${257 - y}" fill="#fff" stroke="${UP}" stroke-width="3"/>`;
    });
    document.getElementById('volume-svg').innerHTML = `
        <path d="M0.5 0.5H1055.5V259.5H0.5Z" fill="none" stroke="#ccc"/>
        ${bars.join('')}
        <text class="volume-label" x="2" y="44">6.85亿</text>
        ${line(vol1, volumeY, '#ecc21c')}
        ${line(vol2, volumeY, '#d42bd4')}
        ${line(vol3, volumeY, '#0a9a0a')}`;
}

drawPrice();
drawVolume();
```
